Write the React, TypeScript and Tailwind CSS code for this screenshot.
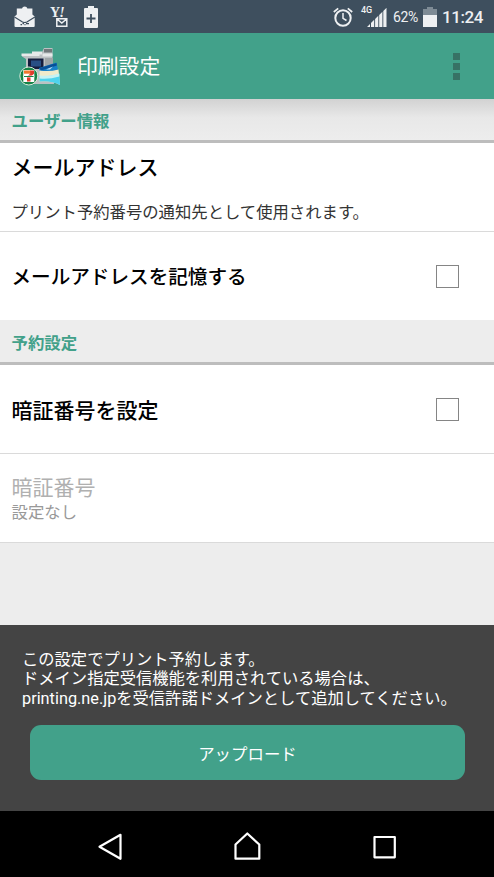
import type { ReactNode } from "react"

const green = "text-[#42a18a]"

function StatusBar() {
  return (
    <div className="flex h-[33px] items-center bg-[#3e4f5e] font-[Roboto,sans-serif] text-[#eef0f2]">
      <svg className="ml-[14px] h-[22px] w-[22px]" viewBox="0 0 22 22" fill="none">
        <path d="M8 2.500q.5-2 2.700-2t2.700 2h5v6l2.300 2v9.500q0 1-1 1H1.500q-1 0-1-1v-9.500l2.300-2v-6z" fill="#eef0f2" />
        <path d="M.5 11l8 5q2.200 1 4.400 0l8-5" stroke="#3e4f5e" strokeWidth="1.200" />
        <path d="M6.500 18.700h1.500m.5-1h1.500m.5 1h1m.5-1h3" stroke="#3e4f5e" strokeWidth="1.300" />
      </svg>
      <div className="relative ml-[14px] h-[22px] w-[19px]">
        <span className="absolute left-0 top-[1px] font-['Liberation_Serif',serif] text-[14px] font-bold leading-[12px] tracking-[-1px]">
          Y<i>!</i>
        </span>
        <svg className="absolute left-[6px] top-[12px]" width="12" height="9" viewBox="0 0 12 9" fill="none">
          <path d="M.8.8h10v7.400h-10zM1 1l4.800 4 4.800-4" stroke="#eef0f2" strokeWidth="1.500" />
        </svg>
      </div>
      <svg className="ml-[15px] h-[22px] w-[14px]" viewBox="0 0 14 22">
        <path d="M4 0h6v2h3q1 0 1 1v18q0 1-1 1H1q-1 0-1-1V3q0-1 1-1h3z" fill="#eef0f2" />
        <path d="M7 8v9M2.500 12.500h9" stroke="#3e4f5e" strokeWidth="1.800" />
      </svg>

      <svg className="ml-auto h-[20px] w-[20px]" viewBox="0 0 20 20" fill="none" stroke="#eef0f2">
        <circle cx="10" cy="11" r="7.700" strokeWidth="2" />
        <path d="M10 6v5.300l3.500 2.200" strokeWidth="1.500" />
        <path d="M.8 5l4.400-3.700M19.200 5l-4.400-3.700" strokeWidth="1.700" />
      </svg>
      <div className="relative ml-[8px] h-[22px] w-[26px]">
        <span className="absolute left-0 top-0 text-[9px] font-medium leading-[8px]">4G</span>
        <svg className="absolute left-[6px] top-[2px]" width="20" height="19" viewBox="0 0 20 19" fill="#eef0f2">
          <path d="M0 19l3-3v3zM4 15l3.200-3.200V19H4zM8.100 11l3.200-3.200v11.200h-3.200zM12.200 7l3.200-3.200v15.200h-3.200zM16.300 3l3.200-3.200v19.200h-3.200z" />
        </svg>
      </div>
      <span className="ml-[6px] w-[25px] text-[14px] leading-none tracking-[-0.4px]">62%</span>
      <svg className="ml-[5px] h-[20px] w-[14px]" viewBox="0 0 14 20">
        <path d="M4 0h6v2h4v7H0V2h4z" fill="#7e8b95" />
        <path d="M0 8h14v12H0z" fill="#eef0f2" />
      </svg>
      <span className="ml-[5px] mr-[10px] w-[42px] whitespace-nowrap pt-[1px] text-[17px] font-medium leading-none tracking-[-0.4px]">
        11:24
      </span>
    </div>
  )
}

// multi-function printer with photos and the shop badge
function AppLogo() {
  return (
    <svg className="h-[40px] w-[42px]" viewBox="0 0 42 40">
      <path d="M3 8h10V6h10l2-4h8.500v18l1.500 18H14L7 24V13L3 10.500z" fill="#bcc1c3" />
      <path d="M2.500 7.500h18v2.500h-18zM13 5.500h10v3H13z" fill="#e6e9e9" />
      <path d="M25 3h8v3.500h-8z" fill="#72797b" />
      <path d="M23.500 7.500h10v3h-10z" fill="#e6e9e9" />
      <path d="M26 12h8v8h-8z" fill="#9fa5a7" />
      <path d="M9 12.500h15.500v10.500H9z" fill="#141d3d" />
      <path d="M12 14.500h10v6H12z" fill="#284f85" />
      <path d="M20 22l17.500-5.500 2 10-18 2z" fill="#1881c9" />
      <path d="M20.500 22l17-5 .4 2.500-16 5z" fill="#084f97" />
      <path d="M27 23.500l7-3-3 3z" fill="#bbdcef" />
      <path d="M20.500 24.500q10 1.500 19-1l1.500 15.500q-9-4.500-20.500-3.500z" fill="#f0ebcb" />
      <path d="M20.500 30q10 1 20-2l.5 11q-9-4.500-20.500-3.500z" fill="#4ed3ed" />
      <path d="M20.500 29.500q10 1 19.800-2v3q-10 3-19.800 2z" fill="#c6f2f3" />
      <circle cx="9.800" cy="30" r="9" fill="#168448" stroke="#d9eadb" strokeWidth="1" />
      <path d="M4.300 24h11v12h-11z" fill="#fff" />
      <path d="M5 24.500h7v3.200H5z" fill="#f0782d" />
      <path d="M11.300 24.500h3.700v3.200l-3.500 3.300v4.500H8v-4.500l3.300-3.500z" fill="#e23b2d" />
      <path d="M4.300 30.500h11" stroke="#fff" strokeWidth="1.800" />
      <path d="M5 30.500h9.600" stroke="#168448" strokeWidth="1" />
    </svg>
  )
}

function SectionHeader({ children, first = false }: { children: ReactNode; first?: boolean }) {
  return (
    <h2
      className={`flex items-center border-b-[3px] border-[#bdbdbd] pl-[11.500px] text-[16.400px] font-bold leading-none ${green} ${
        first
          ? "h-[44px] bg-linear-to-b from-[#d2d2d2] via-[#e8e8e8] via-45% to-[#ededed] pt-[5px]"
          : "h-[45px] bg-[#ededed] pt-[6px]"
      }`}
    >
      {children}
    </h2>
  )
}

function CheckRow({ children, className }: { children: ReactNode; className: string }) {
  return (
    <label className={`flex items-center justify-between bg-white pl-[11.500px] pr-[35px] font-medium leading-none text-black ${className}`}>
      <span className="pt-[4px]">{children}</span>
      <input type="checkbox" className="h-[23px] w-[23px] appearance-none border-[1.500px] border-[#858585] bg-white" />
    </label>
  )
}

export default function App() {
  return (
    <div className="flex h-[877px] w-[494px] flex-col overflow-hidden bg-[#ededed] font-[Roboto,'Noto_Sans_CJK_JP',sans-serif]">
      <StatusBar />

      <header className="flex h-[66px] items-center bg-[#42a18a] pl-[19px] pr-[34px]">
        <AppLogo />
        <h1 className="ml-[16px] pt-[2px] text-[20.800px] leading-none text-white">印刷設定</h1>
        <div className="ml-auto flex flex-col gap-[3px]">
          <span className="h-[7px] w-[7px] bg-[#377265]" />
          <span className="h-[7px] w-[7px] bg-[#377265]" />
          <span className="h-[7px] w-[7px] bg-[#377265]" />
        </div>
      </header>

      <main className="h-[526px]">
        <SectionHeader first>ユーザー情報</SectionHeader>
        <div className="h-[89px] border-b border-[#dadada] bg-white pl-[11.500px] pt-[15px]">
          <p className="text-[21px] font-medium leading-[21px] text-black">メールアドレス</p>
          <p className="mt-[25px] text-[16.350px] leading-[18px] text-[#333]">プリント予約番号の通知先として使用されます。</p>
        </div>
        <CheckRow className="h-[88px] text-[19.600px]">メールアドレスを記憶する</CheckRow>

        <SectionHeader>予約設定</SectionHeader>
        <CheckRow className="h-[89px] border-b border-[#dadada] text-[21px]">暗証番号を設定</CheckRow>
        <div className="h-[89px] border-b border-[#dadada] bg-white pl-[11.500px] pt-[24px]">
          <p className="text-[21px] leading-[21px] text-[#b0b0b0]">暗証番号</p>
          <p className="mt-[5px] text-[16.400px] leading-[18px] text-[#999]">設定なし</p>
        </div>
      </main>

      <footer className="h-[186px] bg-[#444] pl-[22px] pt-[25px] text-white">
        <p className="whitespace-nowrap text-[16.300px] leading-[19.300px]">
          この設定でプリント予約します。
          <br />
          ドメイン指定受信機能を利用されている場合は、
          <br />
          printing.ne.jpを受信許諾ドメインとして追加してください。
        </p>
        <button className="ml-[8px] mt-[17px] h-[55px] w-[435px] rounded-[11px] bg-[#42a18a] pt-[5px] text-[16.450px] leading-none">
          アップロード
        </button>
      </footer>

      <nav className="h-[66px] bg-black">
        <svg width="494" height="66" viewBox="0 0 494 66" fill="none" stroke="#fff" strokeWidth="2.200" strokeLinejoin="round">
          <path d="M99.500 35.800l21-12v24z" />
          <path d="M235.500 33.500l11.800-11 12 11v14.200h-23.800z" />
          <path d="M374.500 26h20.300v20.300h-20.300z" />
        </svg>
      </nav>
    </div>
  )
}
